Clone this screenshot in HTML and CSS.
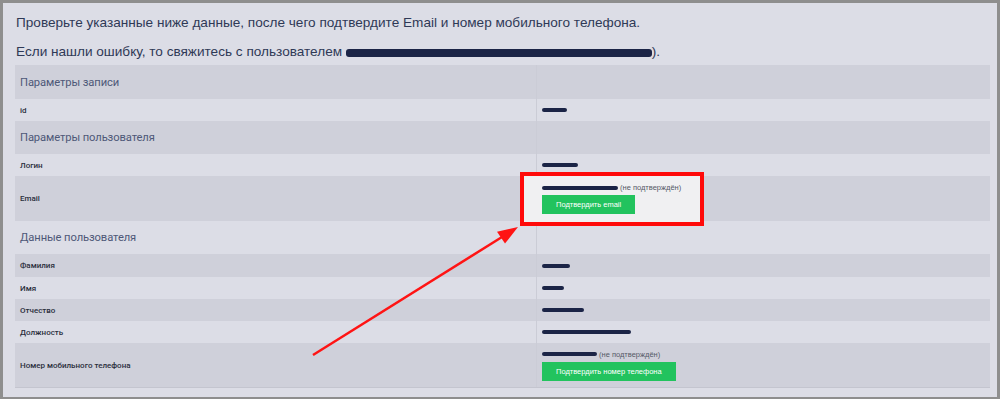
FILE: index.html
```html
<!DOCTYPE html>
<html>
<head>
    <meta charset="UTF-8">
    <title>Проверка данных пользователя</title>
    <link rel="stylesheet" href="styles.css">
</head>
<body>
    <div class="page">
        <div class="intro">
            <p class="intro-first">Проверьте указанные ниже данные, после чего подтвердите Email и номер мобильного телефона.</p>
            <p class="intro-second">Если нашли ошибку, то свяжитесь с пользователем <span class="hidden-big"></span>).</p>
        </div>

        <table class="data-table">
            <tr class="section-row first">
                <td>Параметры записи</td>
                <td></td>
            </tr>
            <tr>
                <td class="label">id</td>
                <td class="value"><span class="hidden" style="width: 25px;"></span></td>
            </tr>
            <tr class="section-row">
                <td>Параметры пользователя</td>
                <td></td>
            </tr>
            <tr>
                <td class="label">Логин</td>
                <td class="value"><span class="hidden" style="width: 36px;"></span></td>
            </tr>
            <tr class="tall-row">
                <td class="label">Email</td>
                <td class="value">
                    <div class="confirm-box">
                        <div class="confirm-line"><span class="hidden" style="width: 76px;"></span><span class="status">(не подтверждён)</span></div>
                        <button class="confirm-btn">Подтвердить email</button>
                    </div>
                </td>
            </tr>
            <tr class="section-row">
                <td>Данные пользователя</td>
                <td></td>
            </tr>
            <tr class="first-data">
                <td class="label">Фамилия</td>
                <td class="value"><span class="hidden" style="width: 28px;"></span></td>
            </tr>
            <tr>
                <td class="label">Имя</td>
                <td class="value"><span class="hidden" style="width: 22px;"></span></td>
            </tr>
            <tr>
                <td class="label">Отчество</td>
                <td class="value"><span class="hidden" style="width: 42px;"></span></td>
            </tr>
            <tr>
                <td class="label">Должность</td>
                <td class="value"><span class="hidden" style="width: 89px;"></span></td>
            </tr>
            <tr class="tall-row phone-row">
                <td class="label">Номер мобильного телефона</td>
                <td class="value">
                    <div class="confirm-box">
                        <div class="confirm-line"><span class="hidden" style="width: 55px;"></span><span class="status">(не подтверждён)</span></div>
                        <button class="confirm-btn">Подтвердить номер телефона</button>
                    </div>
                </td>
            </tr>
        </table>

        <div class="highlight"></div>

        <svg class="arrow" width="1000" height="399" viewBox="0 0 1000 399">
            <line x1="313" y1="355" x2="502" y2="237" stroke="#ff1414" stroke-width="2.5"/>
            <polygon points="518,227 505,243.5 497,231.7" fill="#ff1414"/>
        </svg>
    </div>
</body>
</html>
```

FILE: styles.css
```css
body {
    margin: 0;
    padding: 0;
    background-color: #8e8e8e;
}

.page {
    position: relative;
    z-index: 0;
    width: 1000px;
    height: 399px;
    box-sizing: border-box;
    border: 3px solid #8e8e8e;
    border-bottom-width: 2px;
    background-color: #dcdde6;
    padding: 4px 7px 0 12px;
    font-family: "Liberation Sans", Arial, sans-serif;
    overflow: hidden;
}

.intro p {
    margin: 0;
    font-size: 13.6px;
    color: #2f3956;
    padding-left: 1px;
}

.intro-first {
    line-height: 31px;
}

.intro-second {
    line-height: 27px;
}

.hidden-big {
    display: inline-block;
    width: 306px;
    height: 8px;
    background-color: #1b2446;
    border-radius: 3px;
    vertical-align: -1px;
}

.data-table {
    width: 975px;
    border-collapse: collapse;
}

.data-table td {
    padding: 0 0 0 5px;
    height: 22px;
}

.data-table td:first-child {
    width: 516px;
}

.data-table td + td {
    border-left: 1px solid #cbccd6;
}

.data-table tr:nth-child(odd) {
    background-color: #cfd0da;
}

.data-table tr:nth-child(even) {
    background-color: #dcdde6;
}

.section-row td {
    height: 33px;
    font-family: Roboto, "Liberation Sans", sans-serif;
    font-weight: 400;
    font-size: 11.2px;
    letter-spacing: -0.1px;
    color: #4e5878;
}

.section-row.first td {
    height: 34px;
}

.first-data td {
    height: 23px;
}

.label {
    font-family: Roboto, "Liberation Sans", sans-serif;
    font-size: 8px;
    font-weight: 500;
    color: #2a2e3c;
}

.value {
    font-size: 0;
}

.hidden {
    display: inline-block;
    height: 4px;
    background-color: #1b2446;
    border-radius: 2px;
    vertical-align: middle;
}

.tall-row td {
    height: 45px;
}

.phone-row td {
    height: 44px;
    border-bottom: 1px solid #c4c5cf;
}

.confirm-box {
    position: relative;
    z-index: 1;
}

.confirm-line {
    height: 10px;
    line-height: 10px;
    font-size: 8px;
}

.status {
    margin-left: 2px;
    font-size: 7.5px;
    color: #555a66;
}

.confirm-btn {
    display: block;
    margin-top: 2px;
    height: 19px;
    padding: 0 14px;
    border: none;
    background-color: #22c35e;
    color: white;
    font-family: "Liberation Sans", Arial, sans-serif;
    font-size: 7.5px;
}

.highlight {
    position: absolute;
    z-index: 0;
    left: 517px;
    top: 169px;
    width: 176px;
    height: 46px;
    border: 4px solid #ff0a0a;
    background-color: #f0f0f2;
}

.arrow {
    position: absolute;
    z-index: 2;
    left: -3px;
    top: -3px;
}
```
